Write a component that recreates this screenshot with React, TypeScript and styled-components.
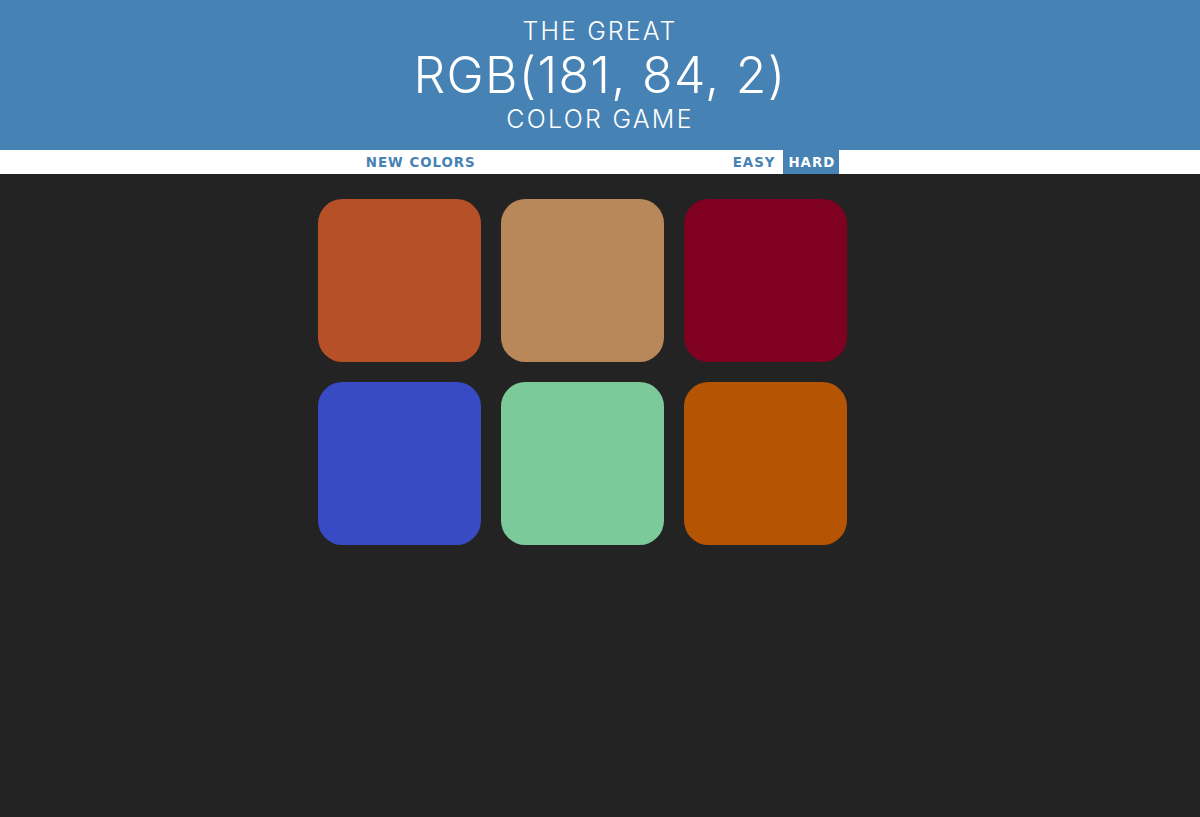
import React from "react";
import styled, { createGlobalStyle } from "styled-components";

const Global = createGlobalStyle`
  html, body { margin: 0; padding: 0; background: #232323; }
  body { font-family: "Inter", "Liberation Sans", sans-serif; }
`;

const Header = styled.h1`
  margin: 0;
  height: 150px;
  box-sizing: border-box;
  background: #4682b4;
  color: #ffffff;
  text-align: center;
  text-transform: uppercase;
  font-weight: 300;
  display: flex;
  flex-direction: column;
  align-items: center;
  padding-top: 16px;
`;

const Line = styled.span<{ $size: number; $ls: number; $h: number }>`
  display: block;
  font-size: ${(p) => p.$size}px;
  letter-spacing: ${(p) => p.$ls}px;
  line-height: ${(p) => p.$h}px;
  font-weight: 300;
`;

const Stripe = styled.div`
  height: 24px;
  background: #ffffff;
  display: flex;
  justify-content: center;
  align-items: stretch;
  gap: 4px;
`;

const Button = styled.button<{ $selected?: boolean }>`
  border: none;
  margin: 0;
  padding: 0 4px 0 5px;
  height: 100%;
  background: ${(p) => (p.$selected ? "#4682b4" : "transparent")};
  color: ${(p) => (p.$selected ? "#ffffff" : "#4682b4")};
  font-family: "DejaVu Sans", sans-serif;
  font-size: 13.33px;
  font-weight: 700;
  letter-spacing: 1px;
  text-transform: uppercase;
  cursor: pointer;
`;

const Message = styled.span`
  display: inline-block;
  width: 240px;
`;

const Board = styled.div`
  display: grid;
  grid-template-columns: repeat(3, 163px);
  grid-auto-rows: 163px;
  gap: 19.8px;
  width: 530px;
  margin: 25px 0 0 318.3px;
`;

const Square = styled.div<{ $color: string }>`
  background: ${(p) => p.$color};
  border-radius: 15%;
`;

const colors = [
  "rgb(181, 80, 39)",
  "rgb(184, 135, 90)",
  "rgb(127, 0, 32)",
  "rgb(56, 75, 196)",
  "rgb(124, 201, 154)",
  "rgb(181, 84, 2)",
];

export default function App() {
  return (
    <>
      <Global />
      <Header>
        <Line $size={25} $ls={2.1} $h={30}>The Great</Line>
        <Line $size={50} $ls={1.3} $h={58}>RGB(181, 84, 2)</Line>
        <Line $size={25} $ls={2.3} $h={30}>Color Game</Line>
      </Header>
      <Stripe>
        <Button>New Colors</Button>
        <Message />
        <Button>Easy</Button>
        <Button $selected>Hard</Button>
      </Stripe>
      <Board>
        {colors.map((c, i) => (
          <Square key={i} $color={c} />
        ))}
      </Board>
    </>
  );
}
